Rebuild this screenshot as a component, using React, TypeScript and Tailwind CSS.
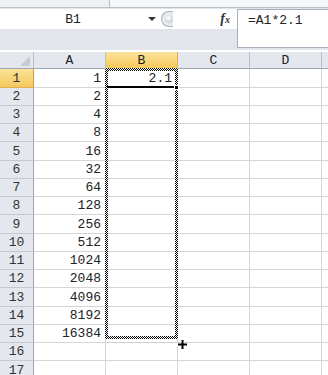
import React from 'react';

const values = ['1', '2', '4', '8', '16', '32', '64', '128', '256', '512', '1024', '2048', '4096', '8192', '16384', '', ''];
// 18.25px average row pitch
const rowH = ['h-[19px]', 'h-[18px]', 'h-[18px]', 'h-[18px]'];
const cols = ['A', 'B', 'C', 'D'];

export default function App() {
  return (
    <div className="w-[328px] h-[375px] overflow-hidden bg-white text-[13px] text-[#222] font-['Liberation_Mono',monospace]">
      {/* ribbon remnant */}
      <div className="flex h-[8px] bg-[#e9edf2] border-b border-[#b9c0c9]">
        <div className="w-[110px] border-r border-[#b9c0c9] bg-[#eef1f4]" />
        <div className="flex-1 bg-[#f4f6f8]" />
      </div>

      {/* formula bar */}
      <div className="flex h-[40px] bg-[#e2e6eb] pt-[1px]">
        <div className="w-[237px] flex flex-col">
          <div className="h-[20px] flex items-center bg-white">
            <div className="w-[146px] text-center leading-none">B1</div>
            <svg width="10" height="6" viewBox="0 0 10 6" className="ml-[1px]">
              <path d="M1 1h8L5 5z" fill="#333" />
            </svg>
            <div className="ml-[4px] w-[12px] h-[16px] rounded-l-full border-l border-y border-[#aab2bc] bg-[#e8ebee] flex items-center justify-end">
              <div className="w-[8px] h-[8px] rounded-full bg-[radial-gradient(circle_at_40%_35%,#ffffff,#b8bec6)]" />
            </div>
            <div className="flex-1" />
            <div className="mr-[7px] font-['Liberation_Serif',serif] italic font-bold text-[14px] leading-none text-[#333]">
              f<span className="text-[10px]">x</span>
            </div>
          </div>
          <div className="flex-1" />
        </div>
        <div className="flex-1 bg-white border border-r-0 border-[#a7afba] pl-[10px] pt-[3px] leading-[16px]">
          =A1*2.1
        </div>
      </div>

      <div className="h-[2px] bg-[#e2e6eb]" />
      <div className="h-[2px] bg-white" />

      {/* grid */}
      <div className="relative">
        {/* column header */}
        <div className="flex h-[17px] bg-[#e4e8ee] border-b border-[#9ea8b4]">
          <div className="w-[34px] border-r border-[#b9c0ca] relative">
            <svg width="10" height="10" viewBox="0 0 10 10" className="absolute right-[3px] bottom-[2px]">
              <path d="M10 0V10H0z" fill="#c6ccd3" />
            </svg>
          </div>
          {cols.map((c) => (
            <div
              key={c}
              className={`w-[72px] border-r flex items-center justify-center leading-none ${
                c === 'B' ? 'bg-[linear-gradient(#fbe39a,#f5c85c)] border-[#e1b04f]' : 'border-[#b9c0ca]'
              }`}
            >
              {c}
            </div>
          ))}
          <div className="flex-1" />
        </div>

        {values.map((v, i) => (
          <div key={i} className={`flex ${rowH[i % 4]}`}>
            <div
              className={`w-[34px] border-r border-b flex items-center justify-center leading-none text-[#333] ${
                i === 0 ? 'bg-[linear-gradient(#fbe39a,#f5c85c)] border-b-[#e1b04f] border-r-[#c99c3e]' : 'bg-[#e4e8ee] border-r-[#9ea8b4] border-b-[#c3c9d1]'
              }`}
            >
              {i + 1}
            </div>
            <div className="w-[72px] border-r border-b border-[#d6d6d6] flex items-center justify-end pr-[4px] leading-none">
              {v}
            </div>
            <div className="w-[72px] border-r border-b border-[#d6d6d6] flex items-center justify-end pr-[5px] leading-none">
              {i === 0 ? '2.1' : ''}
            </div>
            <div className="w-[72px] border-r border-b border-[#d6d6d6]" />
            <div className="w-[72px] border-r border-b border-[#d6d6d6]" />
            <div className="flex-1 border-b border-[#d6d6d6]" />
          </div>
        ))}

        {/* copy selection (marching ants) */}
        <div className="absolute left-[105px] top-[16px] w-[73px] h-[3px] bg-[repeating-conic-gradient(#000_0_25%,#fff_0_50%)] bg-[length:2px_2px]" />
        <div className="absolute left-[105px] top-[284px] w-[73px] h-[3px] bg-[repeating-conic-gradient(#000_0_25%,#fff_0_50%)] bg-[length:2px_2px]" />
        <div className="absolute left-[105px] top-[16px] w-[3px] h-[271px] bg-[repeating-conic-gradient(#000_0_25%,#fff_0_50%)] bg-[length:2px_2px]" />
        <div className="absolute left-[175px] top-[16px] w-[3px] h-[271px] bg-[repeating-conic-gradient(#000_0_25%,#fff_0_50%)] bg-[length:2px_2px]" />

        {/* active cell bottom edge + fill handle */}
        <div className="absolute left-[107px] top-[34px] w-[68px] h-[2px] bg-black" />
        <div className="absolute left-[174px] top-[33px] w-[5px] h-[5px] bg-black border border-white" />

        {/* cursor */}
        <svg width="11" height="11" viewBox="0 0 11 11" className="absolute left-[177px] top-[287px]">
          <path d="M4 0h3v4h4v3H7v4H4V7H0V4h4z" fill="#fff" />
          <path d="M4.5 1h2v3.5H10v2H6.5V10h-2V6.5H1v-2h3.5z" fill="#000" />
        </svg>
      </div>
    </div>
  );
}
